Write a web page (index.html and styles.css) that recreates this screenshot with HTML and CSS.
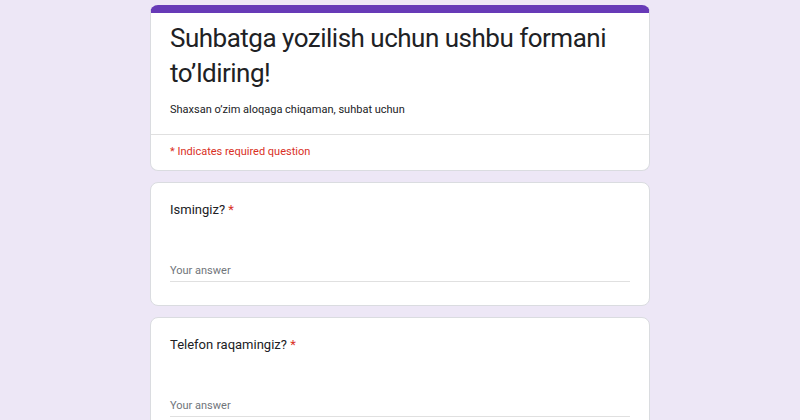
FILE: index.html
```html
<!DOCTYPE html>
<html lang="uz">
<head>
<meta charset="utf-8">
<title>Form</title>
<link rel="stylesheet" href="styles.css">
</head>
<body>
<main class="form">
  <section class="card header-card">
    <div class="header-body">
      <h1 class="title">Suhbatga yozilish uchun ushbu formani to’ldiring!</h1>
      <p class="desc">Shaxsan o’zim aloqaga chiqaman, suhbat uchun</p>
    </div>
    <div class="required-note">* Indicates required question</div>
  </section>
  <section class="card question">
    <div class="q-title">Ismingiz? <span class="star">*</span></div>
    <div class="answer">Your answer</div>
  </section>
  <section class="card question">
    <div class="q-title">Telefon raqamingiz? <span class="star">*</span></div>
    <div class="answer">Your answer</div>
  </section>
</main>
</body>
</html>
```

FILE: styles.css
```css
html, body {
  margin: 0;
  padding: 0;
  background: #ede7f6;
  font-family: Roboto, "Noto Sans", sans-serif;
  color: #202124;
}
.form {
  width: 500px;
  margin: 0 auto;
  padding-top: 5px;
  display: flex;
  flex-direction: column;
  gap: 11px;
}
.card {
  background: #fff;
  border: 1px solid #dadce0;
  border-radius: 8px;
  box-sizing: border-box;
}
.header-card {
  border-top: 8px solid #673ab7;
}
.header-body {
  padding: 8px 19px 16px;
  border-bottom: 1px solid #e0e0e0;
}
.title {
  margin: 0;
  font-family: Roboto, sans-serif;
  font-weight: 400;
  font-size: 26px;
  line-height: 35px;
  letter-spacing: -0.5px;
  color: #202124;
}
.desc {
  margin: 11px 0 0;
  font-size: 11px;
  line-height: 16px;
  color: #202124;
}
.required-note {
  padding: 9px 19px 10px;
  font-size: 11px;
  line-height: 16px;
  color: #d93025;
}
.question {
  padding: 18px 19px 23px;
}
.q-title {
  font-size: 13px;
  line-height: 18px;
  color: #202124;
}
.star {
  color: #d93025;
}
.answer {
  margin-top: 44px;
  font-size: 11px;
  line-height: 16px;
  color: #70757a;
  border-bottom: 1px solid #e0e0e0;
  padding-bottom: 2px;
}
```
